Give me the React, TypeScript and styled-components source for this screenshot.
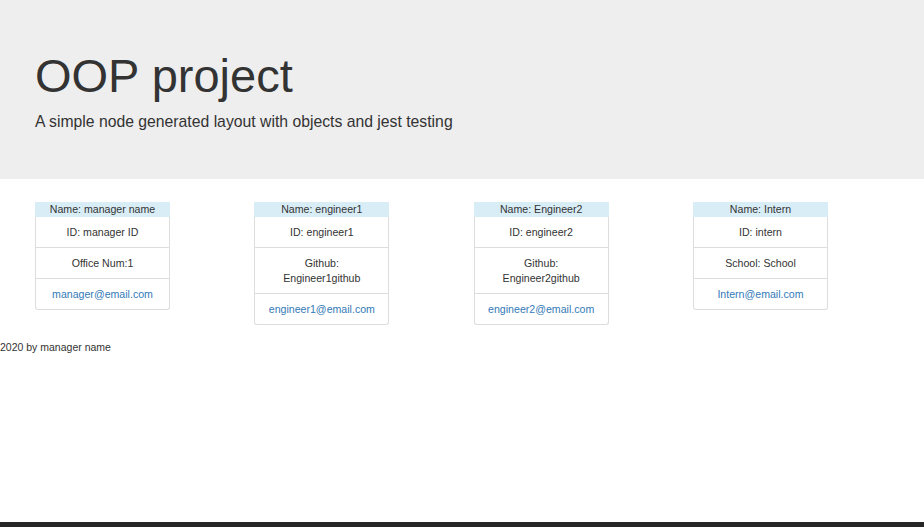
import React from "react";
import styled, { createGlobalStyle } from "styled-components";

const Global = createGlobalStyle`
  html, body { margin: 0; padding: 0; background: #fff; }
  body { font-family: "Liberation Sans", Arial, sans-serif; color: #333; }
  #root { min-height: 527px; display: flex; flex-direction: column; }
`;

const Jumbotron = styled.header`
  background: #eee;
  height: 179px;
  box-sizing: border-box;
  padding: 48px 35px 0;
`;

const Title = styled.h1`
  margin: 0;
  font-size: 47px;
  font-weight: 400;
  line-height: 56px;
  color: #333;
`;

const Lead = styled.p`
  margin: 7px 0 0;
  font-size: 15.75px;
  line-height: 22px;
  color: #333;
`;

const Row = styled.main`
  display: grid;
  grid-template-columns: repeat(4, 219.33px);
  padding: 23px 0 0 35px;
  align-items: start;
`;

const Card = styled.section`
  width: 135px;
  font-size: 10.6px;
  text-align: center;
`;

const CardHeader = styled.div`
  background: #d9edf7;
  height: 15px;
  line-height: 15px;
  color: #333;
`;

const List = styled.ul`
  list-style: none;
  margin: 0;
  padding: 0;
  border: 1px solid #ddd;
  border-top: none;
  border-radius: 0 0 3px 3px;
`;

const Item = styled.li`
  padding: 8px 6px 7px;
  line-height: 15px;
  border-top: 1px solid #ddd;
  &:first-child { border-top: none; }
`;

const Mail = styled.a`
  color: #337ab7;
  text-decoration: none;
`;

const Footer = styled.footer`
  font-size: 10.5px;
  line-height: 15px;
  padding-top: 15px;
  flex: 1;
`;

const Bar = styled.div`
  height: 5px;
  background: #262626;
`;

type Emp = { name: string; id: string; extra: React.ReactNode; email: string };

const emps: Emp[] = [
  { name: "manager name", id: "manager ID", extra: "Office Num:1", email: "manager@email.com" },
  { name: "engineer1", id: "engineer1", extra: <>Github:<br />Engineer1github</>, email: "engineer1@email.com" },
  { name: "Engineer2", id: "engineer2", extra: <>Github:<br />Engineer2github</>, email: "engineer2@email.com" },
  { name: "Intern", id: "intern", extra: "School: School", email: "Intern@email.com" },
];

export default function App() {
  return (
    <>
      <Global />
      <Jumbotron>
        <Title>OOP project</Title>
        <Lead>A simple node generated layout with objects and jest testing</Lead>
      </Jumbotron>
      <Row>
        {emps.map((e) => (
          <Card key={e.email}>
            <CardHeader>Name: {e.name}</CardHeader>
            <List>
              <Item>ID: {e.id}</Item>
              <Item>{e.extra}</Item>
              <Item>
                <Mail href={`mailto:${e.email}`}>{e.email}</Mail>
              </Item>
            </List>
          </Card>
        ))}
      </Row>
      <Footer>2020 by manager name</Footer>
      <Bar />
    </>
  );
}
